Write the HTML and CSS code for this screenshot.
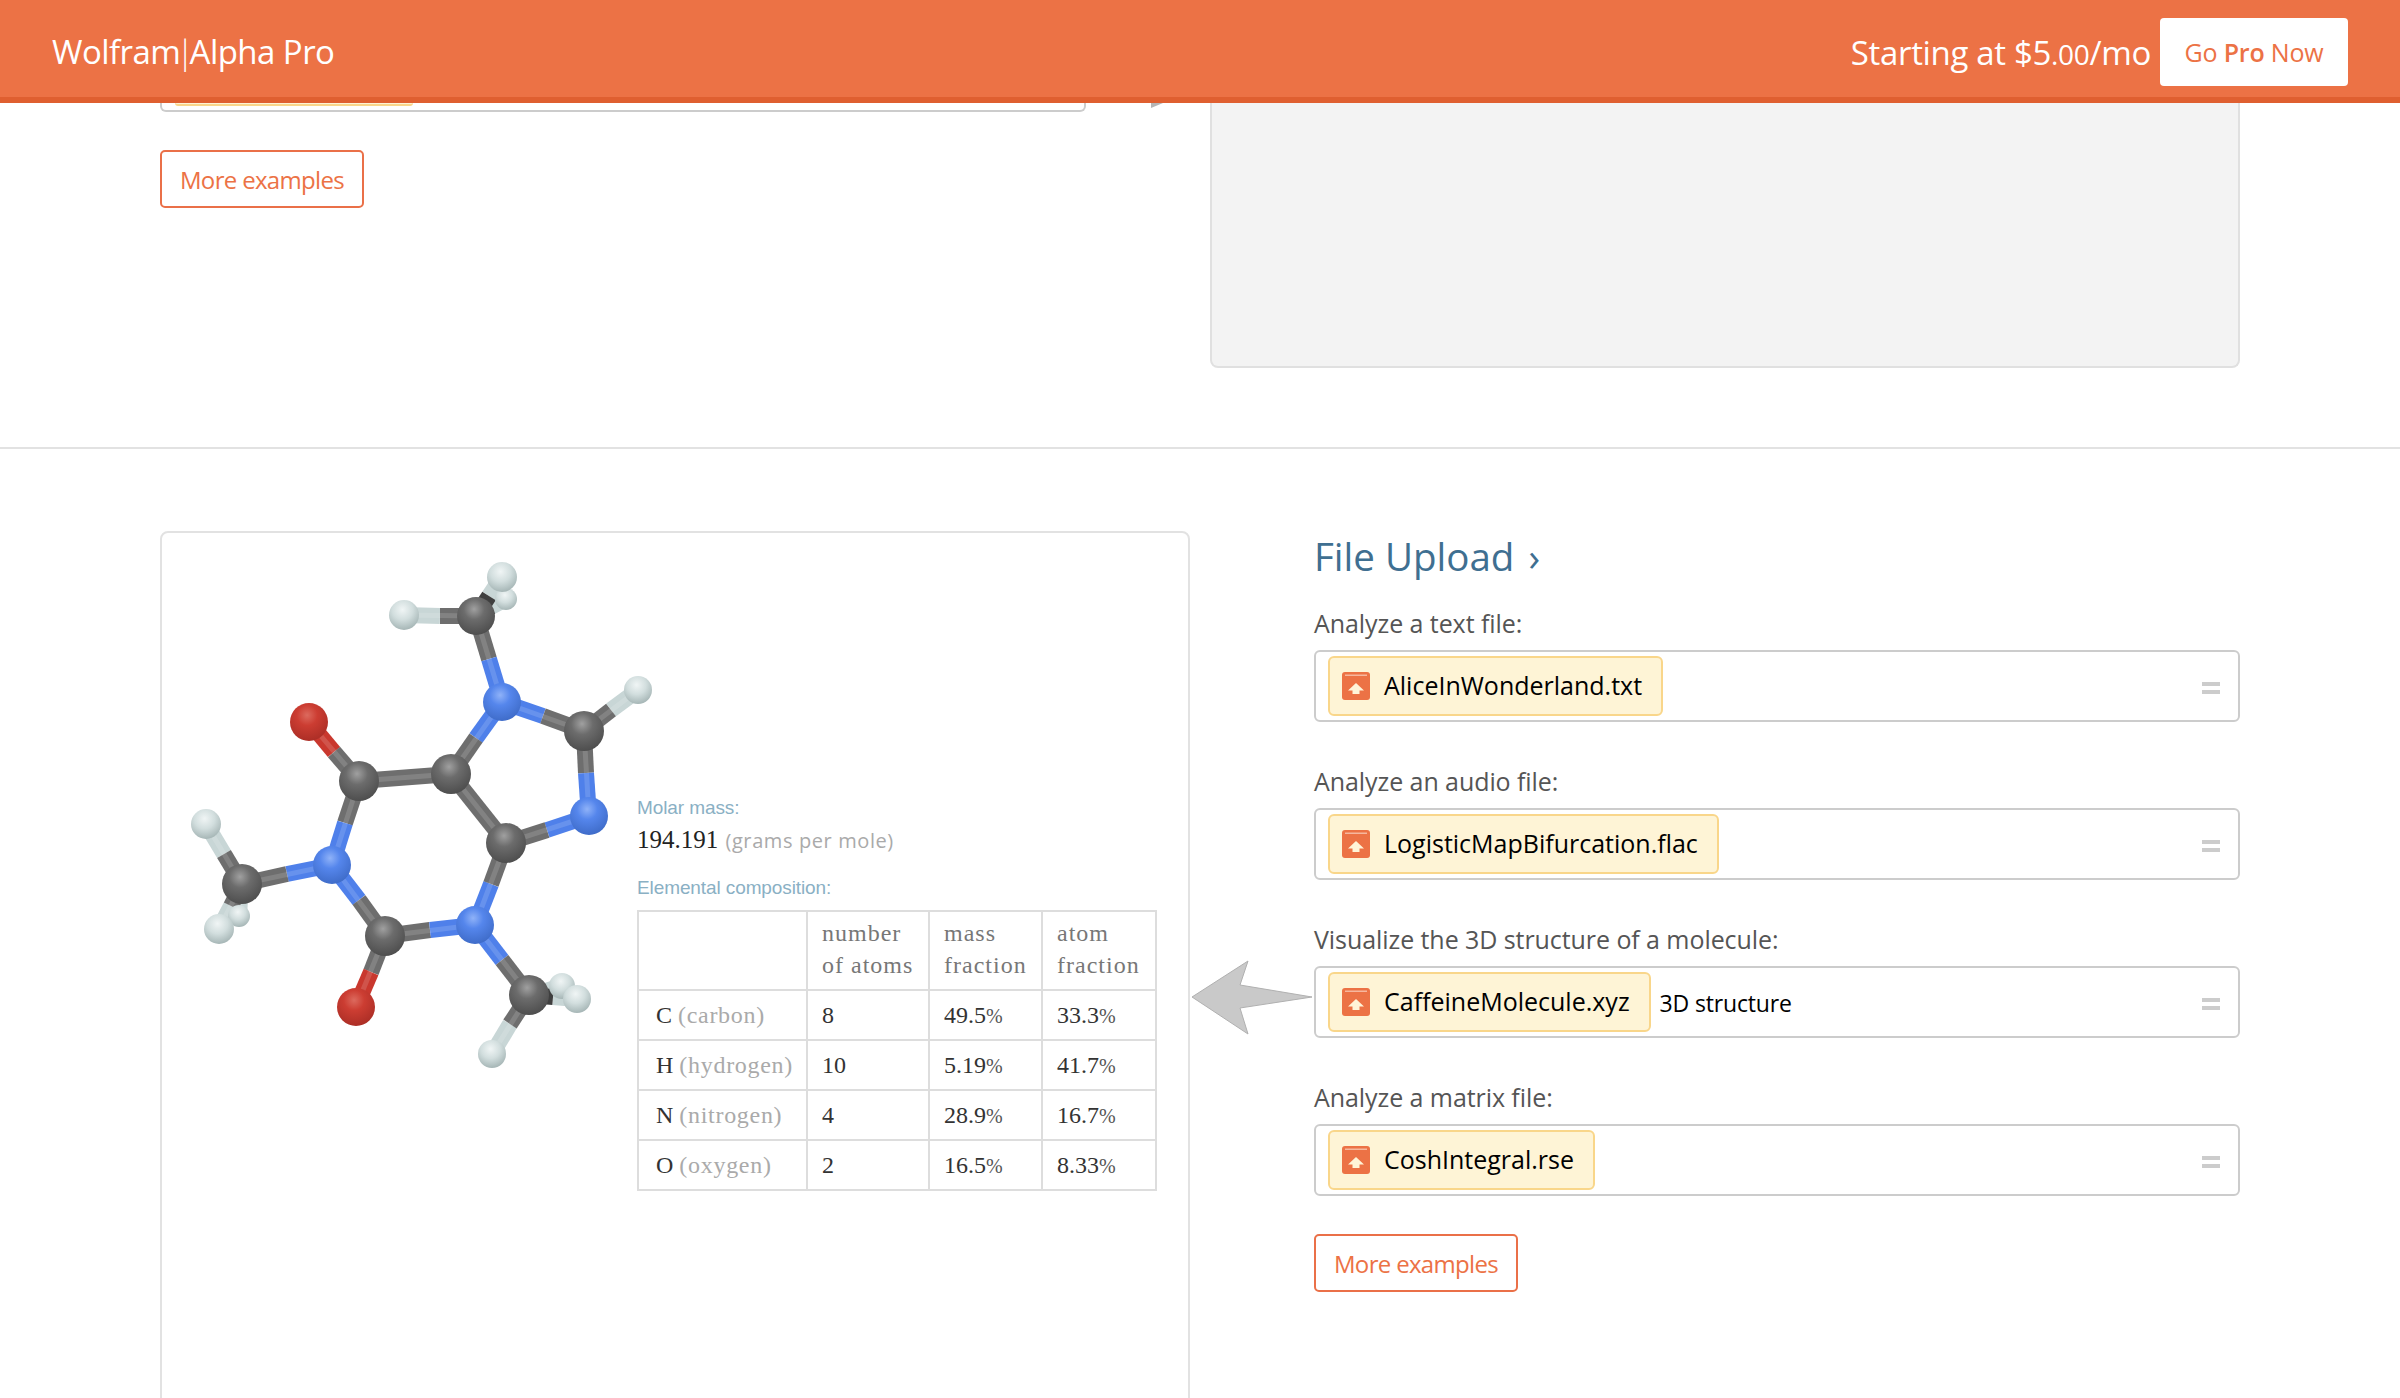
FILE: index.html
```html
<!DOCTYPE html>
<html lang="en">
<head>
<meta charset="utf-8">
<title>Wolfram|Alpha Pro</title>
<link rel="stylesheet" href="styles.css">
</head>
<body>
<header class="topbar">
  <div class="brand">Wolfram<span class="brand-bar">|</span>Alpha Pro</div>
  <div class="offer">
    <span class="price">Starting at $5<small>.00</small>/mo</span>
    <a class="go-pro"><span>Go <b>Pro</b> Now</span></a>
  </div>
</header>

<section class="upper">
  <div class="upper-left">
    <div class="clipped-input"><div class="clipped-chip"></div></div>
    <a class="more more-upper">More examples</a>
  </div>
  <svg class="arrow-tail" viewBox="0 0 14 6" width="14" height="6"><path class="arrow-shape" d="M1 0H13L1 5Z"/></svg>
  <div class="preview"></div>
</section>

<section class="lower">
  <div class="panel">
    <svg class="molecule" viewBox="180 550 480 520" width="480" height="520">
      <defs>
        <radialGradient id="gc" cx="45%" cy="32%" r="68%"><stop offset="0" stop-color="#a0a0a0"/><stop offset=".4" stop-color="#6c6c6c"/><stop offset="1" stop-color="#4e4e4e"/></radialGradient>
        <radialGradient id="gn" cx="45%" cy="32%" r="68%"><stop offset="0" stop-color="#8fb2f8"/><stop offset=".4" stop-color="#5586ec"/><stop offset="1" stop-color="#3f6cc9"/></radialGradient>
        <radialGradient id="go" cx="45%" cy="32%" r="68%"><stop offset="0" stop-color="#dc6a5e"/><stop offset=".4" stop-color="#cc3d32"/><stop offset="1" stop-color="#ac2e26"/></radialGradient>
        <radialGradient id="gh" cx="45%" cy="32%" r="68%"><stop offset="0" stop-color="#f0f5f5"/><stop offset=".5" stop-color="#d2dede"/><stop offset="1" stop-color="#a6b6b6"/></radialGradient>
      </defs>
      <g class="bonds">
        <path class="b-h" d="M507 599L492 607"/><path class="b-c-dark" d="M477 616L492 607"/>
        <path class="b-h" d="M503 577L490 596"/><path class="b-c-dark" d="M477 616L490 596"/>
        <path class="b-h" d="M405 615L441 616"/><path class="b-c" d="M477 616L441 616"/>
        <path class="b-c" d="M477 616L490 659"/><path class="b-n" d="M503 702L490 659"/>
        <path class="b-n" d="M503 702L544 716"/><path class="b-c" d="M585 731L544 716"/>
        <path class="b-n" d="M503 702L477 738"/><path class="b-c" d="M452 774L477 738"/>
        <path class="b-h" d="M639 690L612 710"/><path class="b-c" d="M585 731L612 710"/>
        <path class="b-c" d="M585 731L587 773"/><path class="b-n" d="M590 816L587 773"/>
        <path class="b-n" d="M590 816L548 830"/><path class="b-c" d="M507 843L548 830"/>
        <path class="b-c" d="M507 843L452 774"/>
        <path class="b-c" d="M452 774L360 781"/>
        <path class="b-o" d="M310 722L335 752"/><path class="b-c" d="M360 781L335 752"/>
        <path class="b-c" d="M360 781L346 823"/><path class="b-n" d="M333 865L346 823"/>
        <path class="b-n" d="M333 865L288 874"/><path class="b-c" d="M243 884L288 874"/>
        <path class="b-h" d="M207 824L225 854"/><path class="b-c" d="M243 884L225 854"/>
        <path class="b-h" d="M240 916L241 900"/>
        <path class="b-h" d="M220 929L232 906"/><path class="b-c" d="M243 884L232 906"/>
        <path class="b-n" d="M333 865L360 900"/><path class="b-c" d="M386 936L360 900"/>
        <path class="b-c" d="M386 936L372 972"/><path class="b-o" d="M357 1007L372 972"/>
        <path class="b-c" d="M386 936L431 930"/><path class="b-n" d="M476 925L431 930"/>
        <path class="b-n" d="M476 925L492 884"/><path class="b-c" d="M507 843L492 884"/>
        <path class="b-n" d="M476 925L503 960"/><path class="b-c" d="M530 995L503 960"/>
        <path class="b-h" d="M563 986L547 991"/><path class="b-c-dark" d="M530 995L547 991"/>
        <path class="b-h" d="M578 999L554 997"/><path class="b-c-dark" d="M530 995L554 997"/>
        <path class="b-h" d="M493 1054L511 1024"/><path class="b-c" d="M530 995L511 1024"/>
        <path class="b-sheen" d="M405 615L477 616M477 616L503 702M503 702L585 731M503 702L452 774M639 690L585 731M585 731L590 816M590 816L507 843M507 843L452 774M452 774L360 781M310 722L360 781M360 781L333 865M333 865L243 884M207 824L243 884M220 929L243 884M333 865L386 936M386 936L357 1007M386 936L476 925M476 925L507 843M476 925L530 995M493 1054L530 995"/>
      </g>
      <circle class="h" cx="507" cy="599" r="11"/>
      <circle class="h" cx="563" cy="986" r="13"/>
      <circle class="h" cx="240" cy="916" r="11"/>
      <circle class="c" cx="477" cy="616" r="19"/>
      <circle class="h" cx="503" cy="577" r="15"/>
      <circle class="h" cx="405" cy="615" r="15"/>
      <circle class="n" cx="503" cy="702" r="19"/>
      <circle class="c" cx="585" cy="731" r="20"/>
      <circle class="h" cx="639" cy="690" r="14"/>
      <circle class="n" cx="590" cy="816" r="19"/>
      <circle class="c" cx="507" cy="843" r="20"/>
      <circle class="c" cx="452" cy="774" r="20"/>
      <circle class="c" cx="360" cy="781" r="20"/>
      <circle class="o" cx="310" cy="722" r="19"/>
      <circle class="n" cx="333" cy="865" r="19"/>
      <circle class="c" cx="243" cy="884" r="20"/>
      <circle class="h" cx="207" cy="824" r="15"/>
      <circle class="h" cx="220" cy="929" r="15"/>
      <circle class="c" cx="386" cy="936" r="20"/>
      <circle class="o" cx="357" cy="1007" r="19"/>
      <circle class="n" cx="476" cy="925" r="19"/>
      <circle class="c" cx="530" cy="995" r="20"/>
      <circle class="h" cx="578" cy="999" r="14"/>
      <circle class="h" cx="493" cy="1054" r="14"/>
    </svg>
    <div class="facts">
      <div class="fact-label">Molar mass:</div>
      <div class="fact-value"><span class="num">194.191</span> <span class="unit">(grams per mole)</span></div>
      <div class="fact-label fact-label-2">Elemental composition:</div>
      <table class="elements">
        <tr class="head"><th></th><th>number<br>of atoms</th><th>mass<br>fraction</th><th>atom<br>fraction</th></tr>
        <tr><td class="el">C <span class="nm">(carbon)</span></td><td>8</td><td>49.5<i>%</i></td><td>33.3<i>%</i></td></tr>
        <tr><td class="el">H <span class="nm">(hydrogen)</span></td><td>10</td><td>5.19<i>%</i></td><td>41.7<i>%</i></td></tr>
        <tr><td class="el">N <span class="nm">(nitrogen)</span></td><td>4</td><td>28.9<i>%</i></td><td>16.7<i>%</i></td></tr>
        <tr><td class="el">O <span class="nm">(oxygen)</span></td><td>2</td><td>16.5<i>%</i></td><td>8.33<i>%</i></td></tr>
      </table>
    </div>
  </div>

  <div class="uploads">
    <h2 class="title">File Upload <span class="chev">›</span></h2>

    <div class="example">
      <label class="ex-label">Analyze a text file:</label>
      <div class="field">
        <span class="chip"><svg class="up" viewBox="0 0 28 28" width="28" height="28"><use href="#upicon"/></svg><span class="chip-name">AliceInWonderland.txt</span></span>
        <span class="eq"></span>
      </div>
    </div>

    <div class="example">
      <label class="ex-label">Analyze an audio file:</label>
      <div class="field">
        <span class="chip"><svg class="up" viewBox="0 0 28 28" width="28" height="28"><use href="#upicon"/></svg><span class="chip-name">LogisticMapBifurcation.flac</span></span>
        <span class="eq"></span>
      </div>
    </div>

    <div class="example">
      <label class="ex-label">Visualize the 3D structure of a molecule:</label>
      <div class="field">
        <span class="chip"><svg class="up" viewBox="0 0 28 28" width="28" height="28"><use href="#upicon"/></svg><span class="chip-name">CaffeineMolecule.xyz</span></span>
        <span class="extra">3D structure</span>
        <span class="eq"></span>
      </div>
      <svg class="pointer" viewBox="0 0 124 75" width="124" height="75"><path class="pointer-shape" d="M2 37L58 1L50 25L122 37L50 48L58 74Z"/></svg>
    </div>

    <div class="example">
      <label class="ex-label">Analyze a matrix file:</label>
      <div class="field">
        <span class="chip"><svg class="up" viewBox="0 0 28 28" width="28" height="28"><use href="#upicon"/></svg><span class="chip-name">CoshIntegral.rse</span></span>
        <span class="eq"></span>
      </div>
    </div>

    <a class="more more-lower">More examples</a>
  </div>
</section>

<svg class="sprite" width="0" height="0">
  <defs>
    <g id="upicon">
      <rect x="0" y="0" width="28" height="28" rx="3" fill="#ec7245"/>
      <rect x="3" y="2.5" width="22" height="1.5" fill="#f6b79e"/>
      <path d="M14 11L22 18.5H17.5V22H10.5V18.5H6Z" fill="#fff4d8"/>
    </g>
  </defs>
</svg>
</body>
</html>
```
FILE: styles.css
```css
* { box-sizing: border-box; }
html, body { margin: 0; height: 1398px; overflow: hidden; background: #fff; }
body { font-family: "Open Sans", "Noto Sans", sans-serif; color: #333; }

.topbar {
  height: 103px;
  background: #ec7245;
  border-bottom: 6px solid #df5f30;
  display: flex;
  justify-content: space-between;
  align-items: center;
  padding: 7px 52px 0 52px;
  color: #fff;
}
.brand { font-size: 33px; letter-spacing: -.55px; padding-bottom: 2px; }
.brand-bar { font-weight: 300; margin: 0 -4px; }
.offer { display: flex; align-items: center; gap: 9px; }
.price { font-size: 33px; letter-spacing: -.33px; }
.price small { font-size: 28px; }
.go-pro {
  width: 188px; height: 68px;
  background: #fff;
  border-radius: 4px;
  color: #ec7245;
  font-size: 25px;
  letter-spacing: -.2px;
  display: flex; align-items: center; justify-content: center;
}
.go-pro b { font-weight: 600; }

.upper {
  height: 346px;
  display: flex;
  padding-left: 160px;
  border-bottom: 2px solid #e2e2e2;
}
.upper-left { width: 926px; }
.clipped-input {
  height: 9px;
  border: 2px solid #ccc;
  border-top: 0;
  border-radius: 0 0 6px 6px;
  padding-left: 13px;
}
.clipped-chip {
  width: 238px; height: 3px;
  background: #fef4d6;
  border-bottom: 2px solid #f9d68a;
  border-radius: 0 0 4px 4px;
}
.arrow-tail { margin-left: 64px; flex: none; }
.arrow-shape { fill: #b5b5b5; }
.more {
  display: flex; align-items: center; justify-content: center;
  width: 204px; height: 58px;
  border: 2px solid #ea7048;
  border-radius: 5px;
  color: #ec7245;
  font-size: 24px;
  letter-spacing: -.67px;
}
.more-upper { margin-top: 38px; }
.preview {
  width: 1030px; height: 265px;
  margin-left: 46px;
  background: #f3f3f3;
  border: 2px solid #e0e0e0;
  border-top: 0;
  border-radius: 0 0 8px 8px;
  flex: none;
}

.lower {
  display: flex;
  padding: 82px 0 0 160px;
}
.panel {
  width: 1030px; height: 900px;
  border: 2px solid #e2e2e2;
  border-radius: 8px;
  padding: 17px 0 0 17px;
  display: flex;
  flex: none;
}
.molecule { flex: none; margin-right: -22px; }
.bonds path { stroke-width: 16; fill: none; }
.b-c { stroke: #6e6e6e; }
.b-c-dark { stroke: #3f3f3f; }
.b-n { stroke: #4f80ea; }
.b-o { stroke: #c9382e; }
.b-h { stroke: #c8d6d6; }
.bonds .b-sheen { stroke: #fff; stroke-width: 5; opacity: .14; }
.c { fill: url(#gc); }
.n { fill: url(#gn); }
.o { fill: url(#go); }
.h { fill: url(#gh); }

.facts { padding-top: 246px; }
.fact-label { font-family: "Liberation Sans", sans-serif; font-size: 19px; letter-spacing: -.1px; color: #8ab0c4; line-height: 24px; }
.fact-label-2 { margin-top: 14px; }
.fact-value { line-height: 40px; white-space: nowrap; }
.num { font-family: "Liberation Serif", serif; font-size: 25px; color: #222; }
.unit { font-family: "Open Sans", sans-serif; font-size: 20px; color: #aaa; letter-spacing: .6px; margin-left: 3px; }
.elements {
  margin-top: 10px;
  border-collapse: collapse;
  font-family: "Liberation Serif", serif;
  font-size: 24px;
  table-layout: fixed;
  width: 520px;
}
.elements th, .elements td {
  border: 2px solid #ddd;
  text-align: left;
  font-weight: 400;
  padding: 0 0 0 14px;
  height: 50px;
  color: #333;
  white-space: nowrap;
}
.elements tr.head th { height: 79px; line-height: 32px; color: #777; letter-spacing: 1px; padding-bottom: 3px; }
.elements th:nth-child(1) { width: 169px; }
.elements th:nth-child(2) { width: 122px; }
.elements th:nth-child(3) { width: 113px; }
.elements td.el { padding-left: 17px; }
.nm { color: #aaa; letter-spacing: .7px; }
.elements i { font-style: normal; font-size: 20px; color: #555; }

.uploads { width: 926px; margin-left: 124px; flex: none; }
.title {
  margin: 0;
  height: 74px;
  font-size: 38.5px;
  font-weight: 400;
  color: #3f6f91;
  line-height: 50px;
}
.chev { margin-left: 4px; }
.example { position: relative; }
.example + .example { margin-top: 41px; }
.ex-label { display: block; font-size: 25px; color: #555; line-height: 36px; height: 45px; letter-spacing: -.07px; }
.field {
  height: 72px;
  border: 2px solid #ccc;
  border-radius: 6px;
  padding: 4px 0 4px 12px;
  display: flex;
  align-items: center;
}
.chip {
  height: 60px;
  background: #fef4d6;
  border: 2px solid #f9d68a;
  border-radius: 6px;
  display: inline-flex;
  align-items: center;
  padding: 0 19px 0 12px;
  font-size: 25px;
  color: #000;
}
.chip-name { padding-bottom: 3px; }
.up { margin-right: 14px; flex: none; }
.extra { margin-left: 9px; font-size: 23px; letter-spacing: -.16px; color: #000; padding-top: 2px; }
.eq {
  width: 18px; height: 12px;
  margin-left: auto; margin-right: 18px;
  border-top: 4px solid #ccc;
  border-bottom: 4px solid #ccc;
  margin-top: 4px;
}
.pointer { position: absolute; left: -124px; top: 39px; }
.pointer-shape { fill: #c9c9c9; stroke: #b0b0b0; stroke-width: 1; }
.more-lower { margin-top: 38px; }
.sprite { position: absolute; }
```
